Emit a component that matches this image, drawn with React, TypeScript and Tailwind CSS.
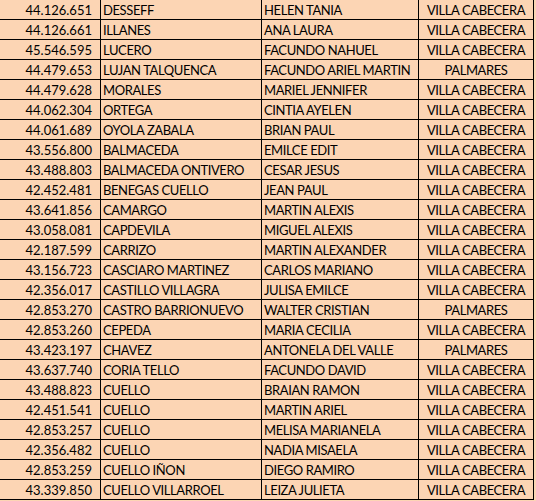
import React from 'react';

type Row = [string, string, string, string];

const rows: Row[] = [
  ['44.126.651', 'DESSEFF', 'HELEN TANIA', 'VILLA CABECERA'],
  ['44.126.661', 'ILLANES', 'ANA LAURA', 'VILLA CABECERA'],
  ['45.546.595', 'LUCERO', 'FACUNDO NAHUEL', 'VILLA CABECERA'],
  ['44.479.653', 'LUJAN TALQUENCA', 'FACUNDO ARIEL MARTIN', 'PALMARES'],
  ['44.479.628', 'MORALES', 'MARIEL JENNIFER', 'VILLA CABECERA'],
  ['44.062.304', 'ORTEGA', 'CINTIA AYELEN', 'VILLA CABECERA'],
  ['44.061.689', 'OYOLA ZABALA', 'BRIAN PAUL', 'VILLA CABECERA'],
  ['43.556.800', 'BALMACEDA', 'EMILCE EDIT', 'VILLA CABECERA'],
  ['43.488.803', 'BALMACEDA ONTIVERO', 'CESAR JESUS', 'VILLA CABECERA'],
  ['42.452.481', 'BENEGAS CUELLO', 'JEAN PAUL', 'VILLA CABECERA'],
  ['43.641.856', 'CAMARGO', 'MARTIN ALEXIS', 'VILLA CABECERA'],
  ['43.058.081', 'CAPDEVILA', 'MIGUEL ALEXIS', 'VILLA CABECERA'],
  ['42.187.599', 'CARRIZO', 'MARTIN ALEXANDER', 'VILLA CABECERA'],
  ['43.156.723', 'CASCIARO MARTINEZ', 'CARLOS MARIANO', 'VILLA CABECERA'],
  ['42.356.017', 'CASTILLO VILLAGRA', 'JULISA EMILCE', 'VILLA CABECERA'],
  ['42.853.270', 'CASTRO BARRIONUEVO', 'WALTER CRISTIAN', 'PALMARES'],
  ['42.853.260', 'CEPEDA', 'MARIA CECILIA', 'VILLA CABECERA'],
  ['43.423.197', 'CHAVEZ', 'ANTONELA DEL VALLE', 'PALMARES'],
  ['43.637.740', 'CORIA TELLO', 'FACUNDO DAVID', 'VILLA CABECERA'],
  ['43.488.823', 'CUELLO', 'BRAIAN RAMON', 'VILLA CABECERA'],
  ['42.451.541', 'CUELLO', 'MARTIN ARIEL', 'VILLA CABECERA'],
  ['42.853.257', 'CUELLO', 'MELISA MARIANELA', 'VILLA CABECERA'],
  ['42.356.482', 'CUELLO', 'NADIA MISAELA', 'VILLA CABECERA'],
  ['42.853.259', 'CUELLO IÑON', 'DIEGO RAMIRO', 'VILLA CABECERA'],
  ['43.339.850', 'CUELLO VILLARROEL', 'LEIZA JULIETA', 'VILLA CABECERA'],
];

export default function App() {
  return (
    <div className="w-[536px] h-[501px] bg-[#fcd5b4] font-['Lato','Liberation_Sans',sans-serif] text-[13px] tracking-[-0.4px] text-black">
      <div className="w-[534px] border-r border-black">
        {rows.map((r, i) => (
          <div key={i} className="grid grid-cols-[101px_161px_157px_114px] h-5 border-b border-black leading-[20px]">
            <div className="border-r border-black text-right pr-2 tracking-normal">{r[0]}</div>
            <div className="border-r border-black pl-[2px] whitespace-nowrap overflow-hidden">{r[1]}</div>
            <div className="border-r border-black pl-[2px] whitespace-nowrap overflow-hidden">{r[2]}</div>
            <div className="text-center whitespace-nowrap">{r[3]}</div>
          </div>
        ))}
      </div>
    </div>
  );
}
